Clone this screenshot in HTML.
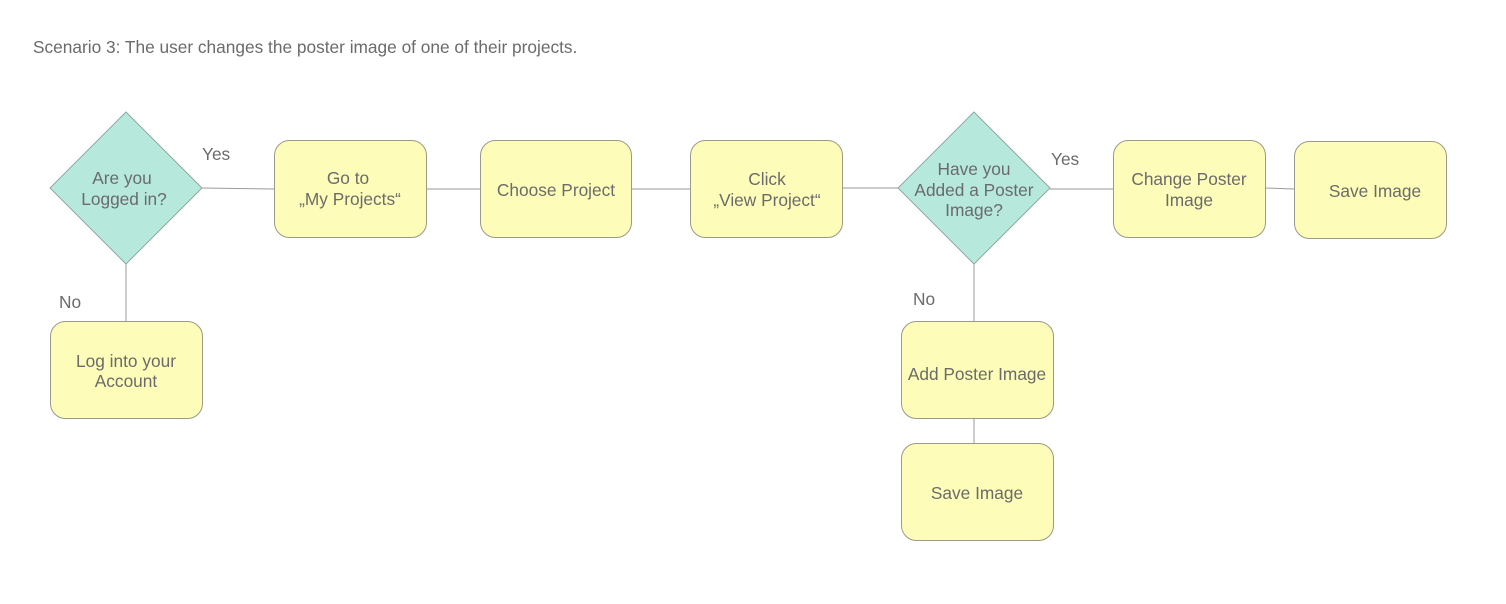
<!DOCTYPE html>
<html><head><meta charset="utf-8"><style>
html,body{margin:0;padding:0;background:#fff;width:1506px;height:604px;overflow:hidden}
svg text{font-family:"Liberation Sans",Arial,sans-serif;font-size:17.3px;fill:#6b6b6b}
</style></head><body>
<svg width="1506" height="604" viewBox="0 0 1506 604" xmlns="http://www.w3.org/2000/svg">
<text x="33" y="53" style="font-size:17.3px">Scenario 3: The user changes the poster image of one of their projects.</text>
<g stroke="#9a9a9a" stroke-width="1" fill="none">
<line x1="202" y1="188" x2="274" y2="189"/>
<line x1="427" y1="189" x2="480" y2="189"/>
<line x1="632" y1="189" x2="690" y2="189"/>
<line x1="842" y1="188" x2="898" y2="188"/>
<line x1="1050" y1="189" x2="1113" y2="189"/>
<line x1="1265" y1="188" x2="1294" y2="189"/>
<line x1="126" y1="264" x2="126" y2="321"/>
<line x1="974" y1="264" x2="974" y2="321"/>
<line x1="974" y1="418" x2="974" y2="443"/>
</g>
<g fill="#b7e8dc" stroke="#8fa9a2" stroke-width="1">
<polygon points="126,112 202,188 126,264 50,188"/>
<polygon points="974,112 1050,188 974,264 898,188"/>
</g>
<g fill="#fdfdb9" stroke="#9a9a88" stroke-width="1">
<rect x="274.5" y="140.5" width="152" height="97" rx="15"/>
<rect x="480.5" y="140.5" width="151" height="97" rx="15"/>
<rect x="690.5" y="140.5" width="152" height="97" rx="15"/>
<rect x="1113.5" y="140.5" width="152" height="97" rx="15"/>
<rect x="1294.5" y="141.5" width="152" height="97" rx="15"/>
<rect x="50.5" y="321.5" width="152" height="97" rx="15"/>
<rect x="901.5" y="321.5" width="152" height="97" rx="15"/>
<rect x="901.5" y="443.5" width="152" height="97" rx="15"/>
</g>
<g text-anchor="middle">
<text x="122" y="184">Are you</text>
<text x="124" y="205">Logged in?</text>
<text x="348" y="184">Go to</text>
<text x="350" y="205">„My Projects“</text>
<text x="556" y="196">Choose Project</text>
<text x="767" y="185">Click</text>
<text x="767" y="206">„View Project“</text>
<text x="974" y="175">Have you</text>
<text x="974" y="196">Added a Poster</text>
<text x="974" y="216">Image?</text>
<text x="1189" y="185">Change Poster</text>
<text x="1189" y="206">Image</text>
<text x="1375" y="197">Save Image</text>
<text x="126" y="367">Log into your</text>
<text x="126" y="387">Account</text>
<text x="977" y="380">Add Poster Image</text>
<text x="977" y="499">Save Image</text>
</g>
<text x="202" y="160">Yes</text>
<text x="1051" y="165">Yes</text>
<text x="59" y="308">No</text>
<text x="913" y="305">No</text>
</svg>
</body></html>
